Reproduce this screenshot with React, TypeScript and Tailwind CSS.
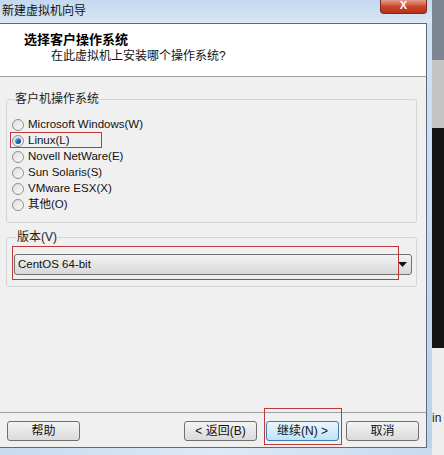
import React from "react";

const F = { fontFamily: '"Liberation Sans", "Noto Sans CJK SC", sans-serif' };

function Radio({ checked, label }: { checked?: boolean; label: string }) {
  return (
    <div className="flex items-center h-[16px]">
      <div className="w-[12px] h-[12px] rounded-full border border-[#8e8f8f] bg-gradient-to-br from-[#dcdcdc] to-[#fbfbfb] flex items-center justify-center shrink-0">
        {checked && (
          <div className="w-[6px] h-[6px] rounded-full bg-gradient-to-br from-[#8adcf9] via-[#1f6fb2] to-[#0b3d78]" />
        )}
      </div>
      <span className="ml-[4px] text-[11.5px] text-[#111] leading-none">{label}</span>
    </div>
  );
}

function Btn({ label, w, primary }: { label: string; w: number; primary?: boolean }) {
  return (
    <div
      style={{ width: w }}
      className={
        "h-[20px] rounded-[3px] border flex items-center justify-center text-[12px] leading-none text-[#111] " +
        (primary
          ? "border-[#3c7fb1] bg-gradient-to-b from-[#eaf6fd] to-[#bfe3f7]"
          : "border-[#707070] bg-gradient-to-b from-[#f4f4f4] to-[#dadada]")
      }
    >
      {label}
    </div>
  );
}

export default function App() {
  return (
    <div className="w-[444px] h-[455px] flex overflow-hidden bg-[#1a1a1a]" style={F}>
      <div className="w-[432px] flex flex-col">
        {/* title bar */}
        <div className="h-[23px] flex bg-gradient-to-b from-[#c4d8ee] to-[#d9e7f5]">
          <div className="flex-1 pl-[2px] pt-[3px] text-[12px] text-[#111] leading-[16px]">新建虚拟机向导</div>
          <div className="w-[47px] h-[14px] mr-[5px] rounded-b-[4px] border border-t-0 border-[#7a2a1f] bg-gradient-to-b from-[#e49e8e] via-[#c9462c] to-[#b9301a] flex items-start justify-center">
            <span className="text-white text-[11px] font-bold leading-[11px]">X</span>
          </div>
        </div>
        <div className="flex-1 flex">
          {/* content */}
          <div className="w-[427px] flex flex-col border-r border-t border-b border-[#5a6c80] bg-[#f0f0f0]">
            <div className="h-[53px] bg-white border-b border-[#a0a0a0] flex flex-col">
              <div className="pl-[24px] pt-[8px] text-[13px] font-bold text-[#000] leading-[16px]">选择客户操作系统</div>
              <div className="pl-[51px] pt-[0px] text-[12px] text-[#111] leading-[16px]">在此虚拟机上安装哪个操作系统?</div>
            </div>
            <div className="flex-1 flex flex-col">
              <fieldset className="ml-[6px] mt-[15px] w-[411px] h-[131px] border border-[#d5d5d5] rounded-[3px] pl-[5px] pt-[11px]">
                <legend className="ml-[2px] px-[1px] text-[12px] text-[#222] leading-[14px]">客户机操作系统</legend>
                <div className="flex flex-col">
                  <Radio label="Microsoft Windows(W)" />
                  <div className="relative">
                    <Radio checked label="Linux(L)" />
                    <div className="absolute left-[-2px] top-[-1px] w-[92px] h-[16px] border border-[#c0393a]" />
                  </div>
                  <Radio label="Novell NetWare(E)" />
                  <Radio label="Sun Solaris(S)" />
                  <Radio label="VMware ESX(X)" />
                  <Radio label="其他(O)" />
                </div>
              </fieldset>
              <fieldset className="ml-[6px] mt-[7px] w-[411px] h-[57px] border border-[#d5d5d5] rounded-[3px] pl-[7px] pt-[10px] relative">
                <legend className="ml-[2px] px-[1px] text-[12px] text-[#222] leading-[14px]">版本(V)</legend>
                <div className="w-[398px] h-[21px] rounded-[3px] border border-[#707070] bg-gradient-to-b from-[#f3f3f3] to-[#d8d8d8] flex items-center">
                  <span className="flex-1 pl-[3px] text-[11.5px] text-[#111] leading-none">CentOS 64-bit</span>
                  <svg width="9" height="5" viewBox="0 0 9 5" className="mr-[4px]">
                    <path d="M0 0H9L4.5 5Z" fill="#111" />
                  </svg>
                </div>
                <div className="absolute left-[5px] top-[2px] w-[387px] h-[34px] border border-[#c0393a]" />
              </fieldset>
              <div className="flex-1" />
              <div className="h-[35px] border-t border-[#a0a0a0] flex items-start pt-[8px] pl-[7px]">
                <Btn label="帮助" w={73} />
                <div className="w-[104px]" />
                <Btn label="< 返回(B)" w={73} />
                <div className="w-[9px]" />
                <div className="relative">
                  <Btn label="继续(N) >" w={73} primary />
                  <div className="absolute left-[-2px] top-[-13px] w-[78px] h-[37px] border border-[#c0393a]" />
                </div>
                <div className="w-[7px]" />
                <Btn label="取消" w={73} />
              </div>
            </div>
          </div>
          <div className="flex-1 bg-gradient-to-b from-[#d2e2f3] to-[#bcd2ea]" />
        </div>
        <div className="h-[7px] bg-gradient-to-r from-[#c6dbf0] via-[#dde9f6] to-[#c6dbf0]" />
      </div>
      <div className="flex-1 flex flex-col">
        <div className="h-[60px] bg-[#7c8591]" />
        <div className="h-[68px] bg-[#c4c4c4]" />
        <div className="h-[220px] bg-[#141414]" />
        <div className="flex-1 bg-[#eeeeee] pt-[64px] text-[12px] leading-none text-[#222] overflow-hidden">in</div>
      </div>
    </div>
  );
}
